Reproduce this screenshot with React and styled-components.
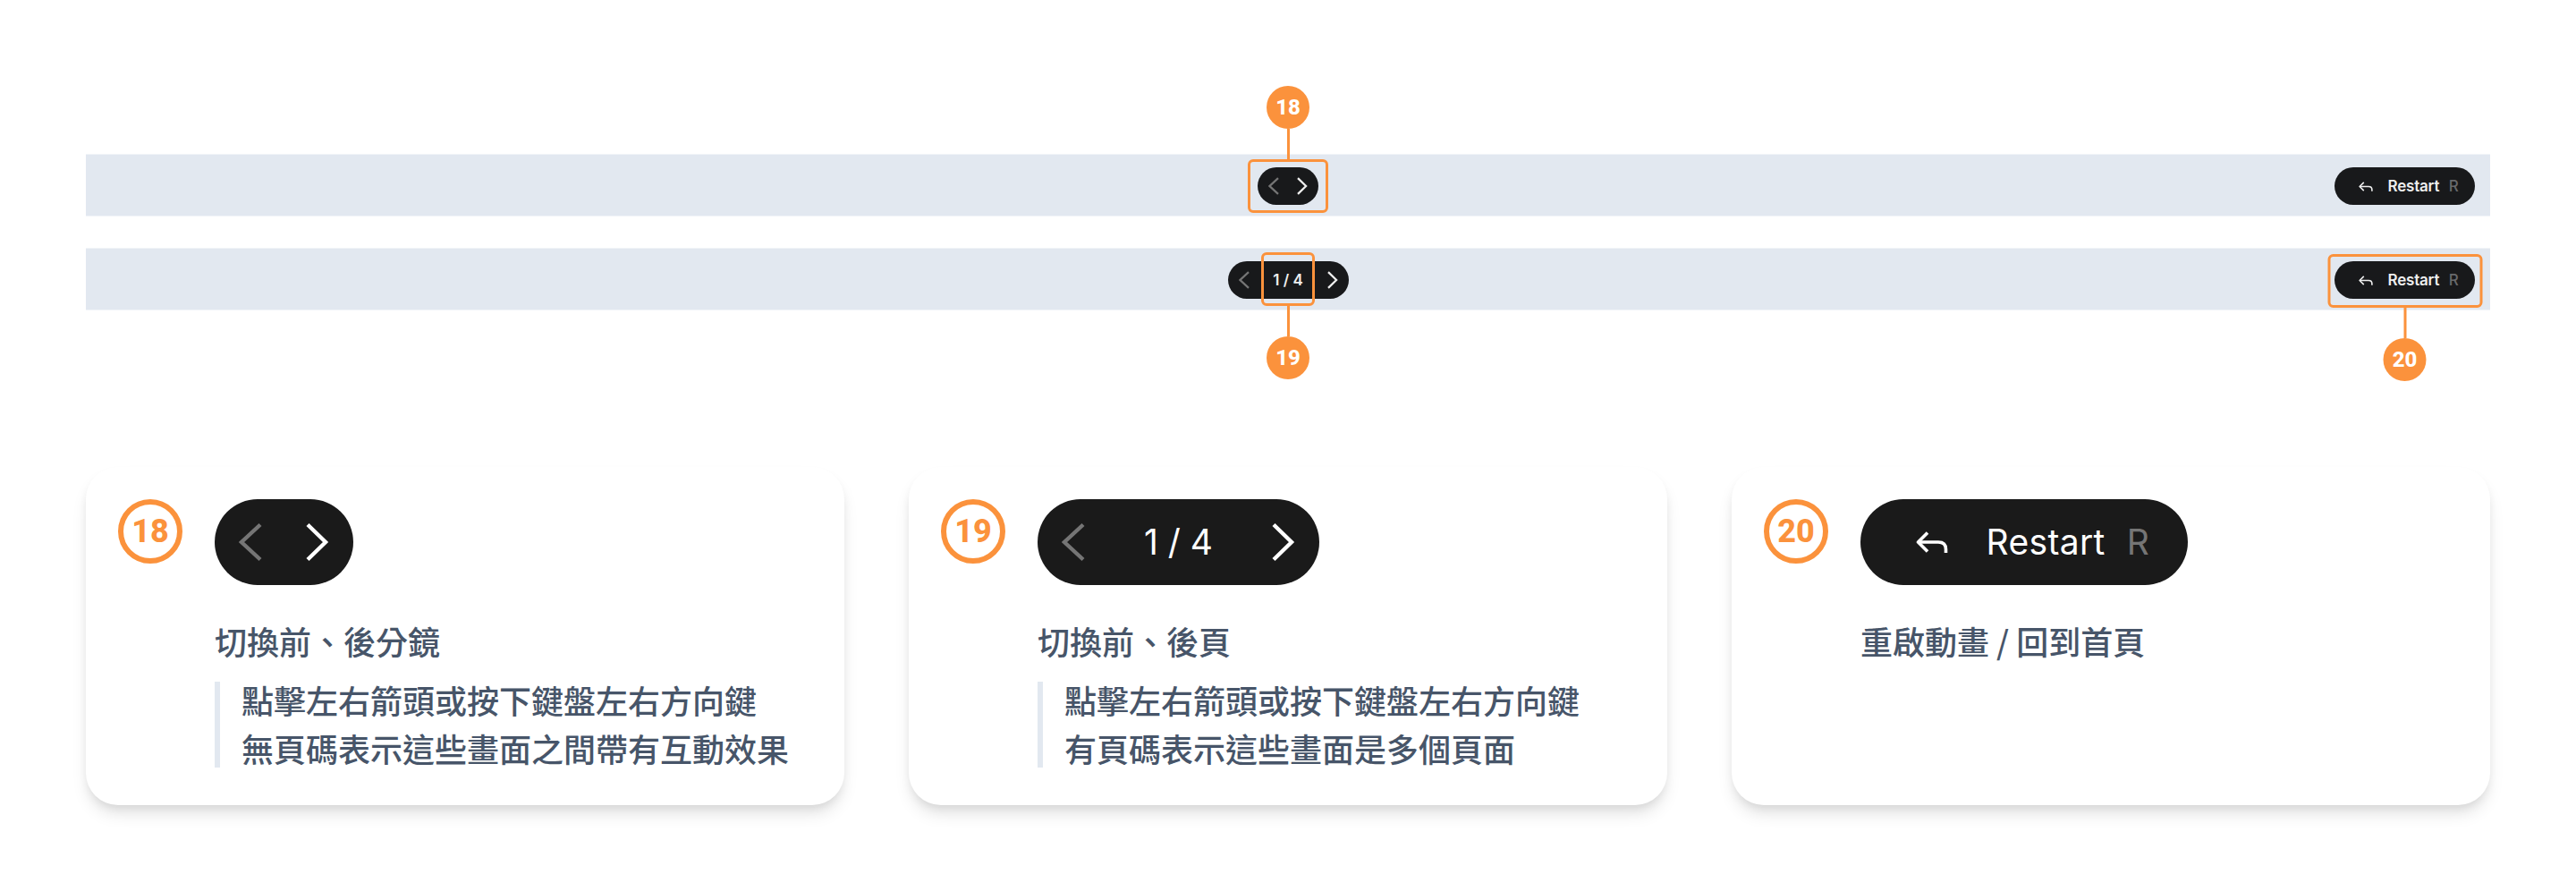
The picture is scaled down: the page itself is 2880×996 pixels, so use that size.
import React from "react";
import styled, { createGlobalStyle, css } from "styled-components";

const Global = createGlobalStyle`
  body { margin: 0; background: #fff; }
  *, *::before, *::after { box-sizing: border-box; }
  p { margin: 0; }
`;

const Page = styled.main`
  width: 2880px;
  height: 996px;
  padding: 172px 96px 96px;
  display: flex;
  flex-direction: column;
  font-family: "Noto Sans CJK TC", sans-serif;
  color: #475569;
`;

const Bars = styled.section`
  display: flex;
  flex-direction: column;
  gap: 35px;
  margin-bottom: 175px;
`;

const Bar = styled.div`
  height: 70px;
  display: grid;
  grid-template-columns: 1fr auto 1fr;
  align-items: center;
  padding: 2px 17px 0;
  background: #e2e8f0;
  border: solid #f1f4f8;
  border-width: 1px 0;
`;

const Middle = styled.div`
  grid-column: 2;
  position: relative;
`;

const End = styled.div`
  grid-column: 3;
  justify-self: end;
  position: relative;
`;

const Pill = styled.div`
  display: flex;
  align-items: center;
  font-family: Inter, sans-serif;
  ${(p) =>
    p.$large
      ? css`
          height: 96px;
          border-radius: 48px;
          background: #1a1a1a;
          color: #fff;
          font-size: 39px;
          font-weight: 400;
        `
      : css`
          height: 42px;
          border-radius: 21px;
          background: #18191b;
          color: #eee;
          font-size: 17px;
          font-weight: 600;
        `}
`;

const PagerPill = styled(Pill)`
  width: ${(p) => p.$width}px;
  justify-content: space-between;
  padding: 0 ${(p) => (p.$large ? 27 : 12)}px;
`;

const RestartPill = styled(Pill)`
  width: ${(p) => (p.$large ? 366 : 157)}px;
  padding-left: ${(p) => (p.$large ? 62 : 27)}px;
`;

const Count = styled.span`
  white-space: nowrap;
  padding-bottom: ${(p) => (p.$large ? 2 : 0)}px;
`;

const Label = styled.span`
  letter-spacing: ${(p) => (p.$large ? 0.35 : -0.2)}px;
  margin-left: ${(p) => (p.$large ? 42.5 : 16.5)}px;
  padding-bottom: ${(p) => (p.$large ? 2 : 0)}px;
`;

const Key = styled.span`
  font-weight: ${(p) => (p.$large ? 400 : 500)};
  color: ${(p) => (p.$large ? "#757575" : "#68696b")};
  margin-left: ${(p) => (p.$large ? 24 : 10.5)}px;
  padding-bottom: ${(p) => (p.$large ? 2 : 0)}px;
`;

const ChevronSvg = styled.svg`
  display: block;
  flex: none;
  width: ${(p) => (p.$large ? 26 : 12)}px;
  height: ${(p) => (p.$large ? 44 : 20)}px;
  color: ${(p) => (p.$dim ? "#757575" : "inherit")};
`;

const BackSvg = styled.svg`
  display: block;
  flex: none;
  width: ${(p) => (p.$large ? 36 : 16)}px;
  height: ${(p) => (p.$large ? 24 : 11)}px;
`;

const Frame = styled.div`
  position: absolute;
  top: ${(p) => p.$top}px;
  left: 50%;
  width: ${(p) => p.$width}px;
  height: 60px;
  transform: translateX(-50%);
  border: 3px solid #fb923c;
  border-radius: 6px;
`;

const Callout = styled.div`
  position: absolute;
  left: 50%;
  transform: translateX(-50%);
  display: flex;
  flex-direction: ${(p) => (p.$above ? "column" : "column-reverse")};
  align-items: center;
  ${(p) => (p.$above ? "bottom: 100%;" : "top: 100%;")}
  &::after {
    content: "";
    width: 3px;
    height: 37px;
    background: #fb923c;
  }
`;

const Dot = styled.span`
  width: 48px;
  height: 48px;
  border-radius: 50%;
  display: grid;
  place-items: center;
  background: #fb923c;
  color: #fff;
  font: 800 24px/1 Roboto, sans-serif;
`;

const Cards = styled.section`
  display: grid;
  grid-template-columns: repeat(3, 1fr);
  gap: 72px;
`;

const Card = styled.article`
  height: 378px;
  display: flex;
  gap: 36px;
  padding: 36px;
  border-radius: 36px;
  background: #fff;
  box-shadow: 0 12px 18px -2px rgba(0, 0, 0, 0.1), 0 6px 12px -4px rgba(0, 0, 0, 0.1);
`;

const Ring = styled.span`
  flex: none;
  width: 72px;
  height: 72px;
  border: 6px solid #fb923c;
  border-radius: 50%;
  display: grid;
  place-items: center;
  color: #fb923c;
  font: 800 36px/1 Roboto, sans-serif;
`;

const Body = styled.div`
  display: flex;
  flex-direction: column;
  align-items: flex-start;
`;

const Title = styled.p`
  margin-top: 35px;
  font-size: 36px;
  line-height: 54px;
  font-weight: 500;
  white-space: nowrap;
`;

const Note = styled.div`
  height: 96px;
  margin-top: 19px;
  padding: 0 0 2px 24px;
  border-left: 6px solid #e2e8f0;
  display: flex;
  flex-direction: column;
  justify-content: center;
  font-size: 36px;
  line-height: 54px;
  font-weight: 500;
  white-space: nowrap;
`;

function Chevron({ next, large }) {
  return (
    <ChevronSvg $large={large} $dim={!next} viewBox="0 0 26 44" fill="none">
      <path
        d={next ? "M2 2.5 L22 22 L2 41.5" : "M24 2.5 L3 22 L24 41.5"}
        stroke="currentColor"
        strokeWidth={large ? 4.4 : 5}
      />
    </ChevronSvg>
  );
}

function Pager({ width, count, large }) {
  return (
    <PagerPill $width={width} $large={large}>
      <Chevron large={large} />
      {count && <Count $large={large}>{count}</Count>}
      <Chevron next large={large} />
    </PagerPill>
  );
}

function Restart({ large }) {
  return (
    <RestartPill $large={large}>
      <BackSvg
        $large={large}
        viewBox="0 0 36 24"
        fill="none"
        stroke="currentColor"
        strokeWidth={3.6}
        strokeLinejoin="round"
      >
        <path d="M13 1.5 L2.5 12 L13 22.5" />
        <path d="M2.5 12 H25 Q33.5 12 33.5 20 V24" />
      </BackSvg>
      <Label $large={large}>Restart</Label>
      <Key $large={large}>R</Key>
    </RestartPill>
  );
}

function Marker({ number, width, top, above }) {
  return (
    <Frame $width={width} $top={top}>
      <Callout $above={above}>
        <Dot>{number}</Dot>
      </Callout>
    </Frame>
  );
}

const items = [
  {
    number: 18,
    demo: <Pager width={155} large />,
    title: "切換前、後分鏡",
    notes: ["點擊左右箭頭或按下鍵盤左右方向鍵", "無頁碼表示這些畫面之間帶有互動效果"],
  },
  {
    number: 19,
    demo: <Pager width={315} count="1 / 4" large />,
    title: "切換前、後頁",
    notes: ["點擊左右箭頭或按下鍵盤左右方向鍵", "有頁碼表示這些畫面是多個頁面"],
  },
  { number: 20, demo: <Restart large />, title: "重啟動畫 / 回到首頁" },
];

export default function App() {
  return (
    <Page lang="zh-Hant">
      <Global />
      <Bars>
        <Bar>
          <Middle>
            <Pager width={68} />
            <Marker number={18} width={90} top={-9} above />
          </Middle>
          <End>
            <Restart />
          </End>
        </Bar>
        <Bar>
          <Middle>
            <Pager width={135} count="1 / 4" />
            <Marker number={19} width={60} top={-10} />
          </Middle>
          <End>
            <Restart />
            <Marker number={20} width={173} top={-8} />
          </End>
        </Bar>
      </Bars>
      <Cards>
        {items.map((item) => (
          <Card key={item.number}>
            <Ring>{item.number}</Ring>
            <Body>
              {item.demo}
              <Title>{item.title}</Title>
              {item.notes && (
                <Note>
                  {item.notes.map((line) => (
                    <p key={line}>{line}</p>
                  ))}
                </Note>
              )}
            </Body>
          </Card>
        ))}
      </Cards>
    </Page>
  );
}
